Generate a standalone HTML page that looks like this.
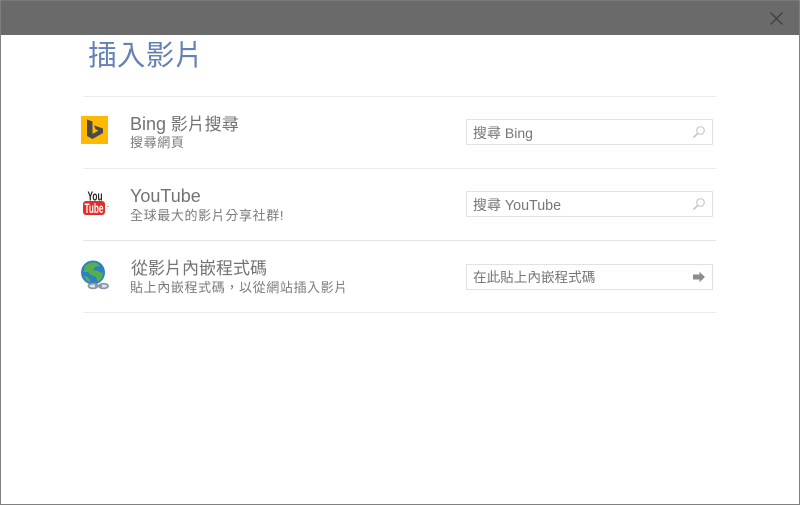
<!DOCTYPE html>
<html lang="zh-Hant">
<head>
<meta charset="utf-8">
<title>插入影片</title>
<style>
html,body{margin:0;padding:0;background:#fff}
body{width:800px;height:505px;position:relative;overflow:hidden;font-family:"Liberation Sans","Noto Sans CJK TC",sans-serif;color:#6a6a6a}
.a{position:absolute;white-space:nowrap}
.line{position:absolute;left:83px;width:633px;height:1px;background:#ececec}
.box{position:absolute;left:466px;width:245px;height:24px;border:1px solid #e2e2e2;background:#fff;font-size:14px;line-height:26px;color:#767676;text-indent:6px;white-space:nowrap}
.t{font-size:17px;line-height:24px;left:130px;color:#727272}
.s{font-size:13px;line-height:18px;left:130px;color:#7a7a7a;letter-spacing:.62px}
svg{position:absolute;display:block}
</style>
</head>
<body>
<div class="a" style="left:0;top:0;width:800px;height:35px;background:#6a6a6a;border-top:1px solid #7a7a7a;box-sizing:border-box"></div>
<div class="a" style="left:0;top:0;width:1px;height:505px;background:#808080"></div>
<div class="a" style="left:799px;top:0;width:1px;height:505px;background:#808080"></div>
<div class="a" style="left:0;top:504px;width:800px;height:1px;background:#808080"></div>
<svg style="left:770px;top:12px" width="13" height="13" viewBox="0 0 13 13"><path d="M.5.5l12 12M12.500.5l-12 12" stroke="#3a3a3a" stroke-width="1.200" fill="none"/></svg>

<div class="a" style="left:88px;top:37px;font-size:28.500px;line-height:38px;color:#6480b4;letter-spacing:.4px">插入影片</div>

<div class="line" style="top:96px"></div>
<div class="line" style="top:168px"></div>
<div class="line" style="top:240px;background:#e4e4e4"></div>
<div class="line" style="top:312px"></div>

<svg style="left:81px;top:116px" width="27" height="28" viewBox="0 0 27 28"><rect width="27" height="28" fill="#ffb900"/><path d="M6 3.500l5.500 2v12.500l6-3.500-3-1.300-1.500-3.800L22 12.500v4.500L11.500 23 6 20z" fill="#4a4a4a"/></svg>
<div class="a t" style="top:112px"><span style="font-size:18px">Bing</span> 影片搜尋</div>
<div class="a s" style="top:134px">搜尋網頁</div>
<div class="box" style="top:119px">搜尋 Bing</div>
<svg style="left:692px;top:125px" width="14" height="14" viewBox="0 0 14 14"><circle cx="8.500" cy="5.500" r="3.800" fill="none" stroke="#cacaca" stroke-width="1.200"/><path d="M5.800 8.300L1.500 12.500" stroke="#c4c4c4" stroke-width="1.600"/></svg>

<svg style="left:82px;top:189px;filter:blur(.3px)" width="27" height="28" viewBox="0 0 27 28"><rect x="1" y="12" width="22" height="14" rx="3" fill="#e52d27"/><rect x="25" y="17" width="1.500" height="1" fill="#aaa"/><text x="13" y="11.500" text-anchor="middle" font-family="Liberation Sans,sans-serif" font-weight="700" font-size="13" fill="#222" textLength="15" lengthAdjust="spacingAndGlyphs">You</text><text x="12" y="23.800" text-anchor="middle" font-family="Liberation Sans,sans-serif" font-weight="700" font-size="14" fill="#fff" textLength="19" lengthAdjust="spacingAndGlyphs">Tube</text></svg>
<div class="a t" style="top:184px;font-size:18px">YouTube</div>
<div class="a s" style="top:207px">全球最大的影片分享社群!</div>
<div class="box" style="top:191px"><span>搜尋</span> <span style="font-size:14.300px">YouTube</span></div>
<svg style="left:692px;top:197px" width="14" height="14" viewBox="0 0 14 14"><circle cx="8.500" cy="5.500" r="3.800" fill="none" stroke="#cacaca" stroke-width="1.200"/><path d="M5.800 8.300L1.500 12.500" stroke="#c4c4c4" stroke-width="1.600"/></svg>

<svg style="left:80px;top:259px;filter:blur(.35px)" width="30" height="32" viewBox="0 0 30 32"><circle cx="13" cy="13.500" r="12" fill="#2e7fc4"/><path d="M5 7c4-4 9-4 12-3l3 3-5 1-2 3 5 1 3 2 2-1-1 6-4 4-2-5-5-2-3-3-4 0z" fill="#55b04a"/><path d="M3 17l5 1 3 5-3 0z" fill="#55b04a"/><ellipse cx="13" cy="27" rx="4.500" ry="2.400" fill="#dfe3e8" stroke="#8b97a8" stroke-width="1.800"/><ellipse cx="23.500" cy="27" rx="4.500" ry="2.400" fill="#dfe3e8" stroke="#8b97a8" stroke-width="1.800"/><rect x="15" y="26" width="7" height="2" fill="#8b97a8"/></svg>
<div class="a t" style="top:257px;left:131px">從影片內嵌程式碼</div>
<div class="a s" style="top:279px">貼上內嵌程式碼，以從網站插入影片</div>
<div class="box" style="top:264px;font-size:13.600px">在此貼上內嵌程式碼</div>
<svg style="left:692px;top:271px" width="14" height="12" viewBox="0 0 14 12"><path d="M1 3.500h6.500V.8L13 6l-5.500 5.200V8.500H1z" fill="#8c8c8c"/></svg>
</body>
</html>
